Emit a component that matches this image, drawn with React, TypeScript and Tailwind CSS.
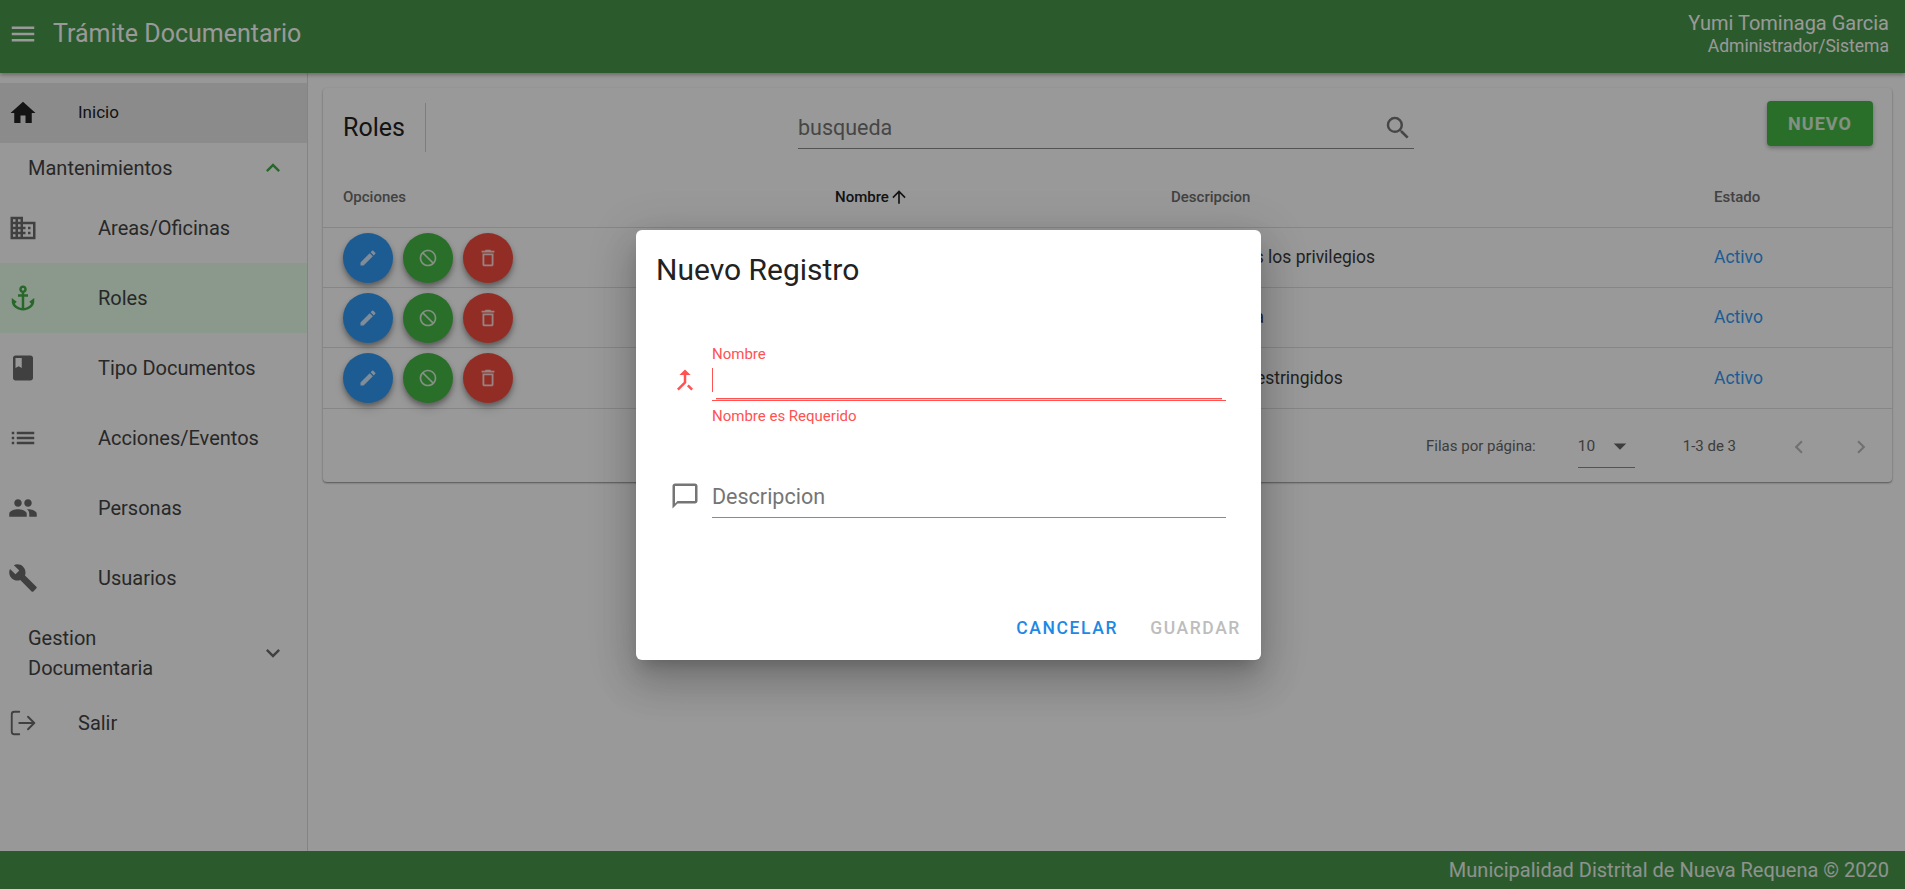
import React from "react";
import {
  MdMenu, MdHome, MdExpandLess, MdExpandMore, MdDomain, MdAnchor, MdBook, MdList, MdPeople, MdBuild,
  MdEdit, MdDoNotDisturb, MdDeleteOutline, MdSearch, MdArrowUpward, MdArrowDropDown, MdChevronLeft, MdChevronRight,
  MdCallMerge, MdChatBubbleOutline,
} from "react-icons/md";
import { LogOut } from "lucide-react";

const items = [
  { label: "Areas/Oficinas", Icon: MdDomain },
  { label: "Roles", Icon: MdAnchor, active: true },
  { label: "Tipo Documentos", Icon: MdBook },
  { label: "Acciones/Eventos", Icon: MdList },
  { label: "Personas", Icon: MdPeople },
  { label: "Usuarios", Icon: MdBuild },
];

const rows = [
  { d: "Tiene todos los privilegios", h: "h-[60px]" },
  { d: "Solo lectura", h: "h-[60px]" },
  { d: "Permisos restringidos", h: "h-[61px]" },
];

function Circle({ color, children }: { color: string; children: React.ReactNode }) {
  return (
    <span className={`flex h-[50px] w-[50px] items-center justify-center rounded-full text-white/80 shadow-[0_3px_5px_rgba(0,0,0,0.3),0_6px_10px_rgba(0,0,0,0.14)] ${color}`}>
      {children}
    </span>
  );
}

export default function App() {
  return (
    <div className="relative flex h-[889px] w-[1905px] flex-col overflow-hidden bg-white font-['Roboto',sans-serif] text-[#222]">
      <header className="z-10 flex h-[73px] shrink-0 items-start justify-between bg-[#48964a] text-white shadow-[0_2px_4px_rgba(0,0,0,0.3)]">
        <div className="flex items-center pl-[8px] pt-[17px]">
          <MdMenu size={30} className="text-white" />
          <span className="ml-[15px] text-[25px] leading-[34px]">Trámite Documentario</span>
        </div>
        <div className="pr-[16px] pt-[11px] text-right">
          <div className="text-[20px] leading-[24px]">Yumi Tominaga Garcia</div>
          <div className="text-[17.5px] leading-[22px]">Administrador/Sistema</div>
        </div>
      </header>

      <div className="flex min-h-0 flex-1">
        <aside className="w-[308px] shrink-0 border-r border-[#dcdcdc] bg-[#fefefe] pt-[10px] text-[20px] text-[#444]">
          <div className="flex h-[60px] items-center bg-[#e8e8e8] pl-[8px] text-[#222]">
            <MdHome size={30} />
            <span className="ml-[40px] text-[17px]">Inicio</span>
          </div>
          <div className="flex h-[50px] items-center justify-between pl-[28px] pr-[20px]">
            <span>Mantenimientos</span>
            <MdExpandLess size={28} className="text-[#42ad46]" />
          </div>
          {items.map(({ label, Icon, active }) => (
            <div key={label} className={`flex h-[70px] items-center pl-[8px] ${active ? "bg-[#e6ffe8]" : ""}`}>
              <Icon size={30} className={active ? "text-[#42ad46]" : "text-[#6b6b6b]"} />
              <span className="ml-[60px]">{label}</span>
            </div>
          ))}
          <div className="flex h-[80px] items-center justify-between pl-[28px] pr-[20px]">
            <span className="w-[170px] leading-[30px]">Gestion Documentaria</span>
            <MdExpandMore size={28} className="text-[#6b6b6b]" />
          </div>
          <div className="flex h-[60px] items-center pl-[8px]">
            <LogOut size={30} strokeWidth={1.5} className="text-[#6b6b6b]" />
            <span className="ml-[40px]">Salir</span>
          </div>
        </aside>

        <main className="min-w-0 flex-1 pl-[15px] pr-[13px] pt-[15px]">
          <section className="h-[394px] rounded-[4px] bg-white shadow-[0_1px_2px_rgba(0,0,0,0.45)]">
            <div className="flex h-[79px] items-start">
              <div className="ml-5 mt-[15px] flex h-[49px] w-[83px] items-center border-r border-[#d0d0d0] text-[25px] text-[#222]">Roles</div>
              <div className="ml-[372px] flex h-[61px] w-[616px] items-end justify-between border-b border-[#8a8a8a] pb-[5px] pr-[1px]">
                <span className="text-[21.5px] leading-[30px] text-[#757575]">busqueda</span>
                <MdSearch size={30} className="text-[#757575]" />
              </div>
              <button className="ml-[353px] mt-[13px] h-[45px] w-[106px] rounded-[4px] bg-[#45b945] text-[18px] font-bold tracking-[1.1px] text-white/80 shadow-[0_2px_4px_rgba(0,0,0,0.3)]">NUEVO</button>
            </div>
            <div className="grid h-[61px] grid-cols-[492px_336px_544px_1fr] items-center border-b border-[#e0e0e0] px-5 text-[15px] font-medium text-[#6e6e6e]">
              <span>Opciones</span>
              <span className="flex items-center text-[#222]">Nombre<MdArrowUpward size={20} /></span>
              <span>Descripcion</span>
              <span className="-ml-px">Estado</span>
            </div>
            {rows.map((r) => (
              <div key={r.d} className={`grid grid-cols-[492px_336px_544px_1fr] items-center border-b border-[#e0e0e0] px-5 text-[17.5px] text-[#3a3a3a] ${r.h}`}>
                <div className="flex gap-[10px]">
                  <Circle color="bg-[#2f9af5]"><MdEdit size={20} /></Circle>
                  <Circle color="bg-[#45b945]"><MdDoNotDisturb size={20} /></Circle>
                  <Circle color="bg-[#f44c3f]"><MdDeleteOutline size={22} /></Circle>
                </div>
                <span />
                <span className="ml-[1px]">{r.d}</span>
                <span className="-ml-px text-[#2f9af5]">Activo</span>
              </div>
            ))}
            <div className="flex h-[73px] items-center pl-[1103px] pt-[2px] text-[15px] text-[#666]">
              <span>Filas por página:</span>
              <span className="ml-[42px] flex h-[40px] w-[57px] translate-y-[1px] items-center justify-between border-b border-[#8a8a8a] text-[15.5px]">
                10<MdArrowDropDown size={30} className="-translate-y-px" />
              </span>
              <span className="ml-[48px] text-[15px]">1-3 de 3</span>
              <MdChevronLeft size={26} className="ml-[50px] text-[#bdbdbd]" />
              <MdChevronRight size={26} className="ml-[36px] text-[#bdbdbd]" />
            </div>
          </section>
        </main>
      </div>

      <footer className="h-[38px] shrink-0 bg-[#48964a] pr-[16px] text-right text-[20px] leading-[38px] text-white/90">
        Municipalidad Distrital de Nueva Requena © 2020
      </footer>

      <div className="absolute inset-0 z-20 flex items-center justify-center bg-black/40 pr-[8px]">
        <div className="flex h-[430px] w-[625px] flex-col rounded-[6px] bg-white shadow-[0_11px_15px_-7px_rgba(0,0,0,0.2),0_24px_38px_3px_rgba(0,0,0,0.14),0_9px_46px_8px_rgba(0,0,0,0.12)]">
          <h2 className="pl-[20px] pt-[22px] text-[30px] font-normal leading-[36px] text-[#222]">Nuevo Registro</h2>

          <div className="mt-[57px] flex pl-[36px] pr-[35px]">
            <div className="flex w-[40px] items-start pr-[15px] pt-[20px] text-[#ff5252]">
              <MdCallMerge size={30} className="shrink-0 -ml-[2.5px]" />
            </div>
            <div className="flex-1">
              <div className="text-[15px] leading-[18px] text-[#ff5252]">Nombre</div>
              <div className="relative h-[38px] border-b border-[#ff5252] pt-[5px]">
                <div className="h-[24px] w-px bg-[#ff5252]" />
                <div className="absolute bottom-0 left-[4px] right-[4px] h-[2px] border-t border-[#ff5252] bg-[#ffc8c8]" />
              </div>
              <div className="mt-[6px] text-[15px] leading-[18px] text-[#ff5252]">Nombre es Requerido</div>
            </div>
          </div>

          <div className="mt-[53px] flex items-center pl-[36px] pr-[35px]">
            <div className="mb-[3px] flex w-[40px] pr-[15px] text-[#757575]">
              <MdChatBubbleOutline size={30} className="shrink-0 -ml-[2.5px]" />
            </div>
            <div className="flex h-[40px] flex-1 items-center border-b border-[#8a8a8a] text-[21.5px] text-[#757575]">Descripcion</div>
          </div>

          <div className="mt-auto flex justify-end gap-[32px] pb-[20px] pr-[20px] text-[17.5px] font-medium leading-[24px] tracking-[1.6px]">
            <span className="text-[#1e88e5]">CANCELAR</span>
            <span className="text-[#bdbdbd]">GUARDAR</span>
          </div>
        </div>
      </div>
    </div>
  );
}
